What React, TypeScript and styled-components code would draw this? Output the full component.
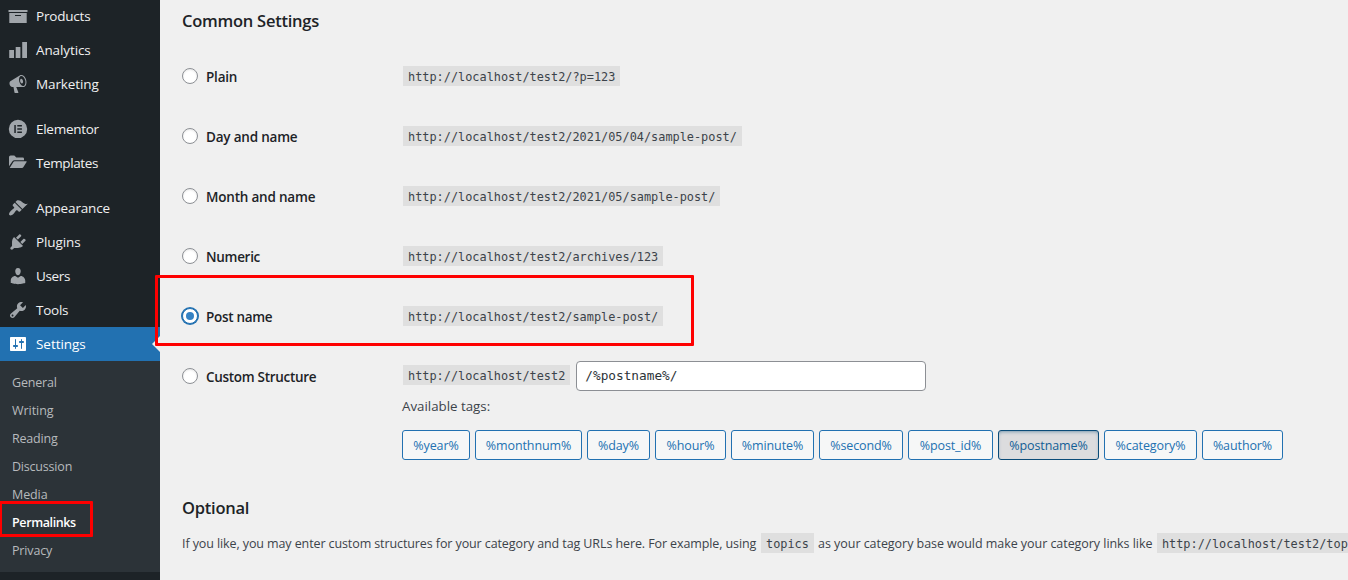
import React from "react";
import styled, { createGlobalStyle } from "styled-components";

const GlobalStyle = createGlobalStyle`
  * { box-sizing: border-box; }
  html, body { margin: 0; padding: 0; overflow: hidden; }
  body {
    background: #f0f0f0;
    color: #3c434a;
    font-family: "Open Sans", "Noto Sans", sans-serif;
    font-size: 12.5px;
  }
`;

const Page = styled.div`
  position: relative;
  display: flex;
  width: 1348px;
  height: 580px;
  overflow: hidden;
`;

/* ---------- Sidebar ---------- */

const Sidebar = styled.nav`
  flex: 0 0 160px;
  height: 580px;
  background: #1d2327;
  overflow: hidden;
`;

const MenuGroup = styled.div<{ $first?: boolean }>`
  display: flex;
  flex-direction: column;
  margin-top: ${(p) => (p.$first ? "-1px" : "11px")};
`;

const MenuItem = styled.a<{ $current?: boolean }>`
  position: relative;
  display: flex;
  align-items: center;
  gap: 8px;
  height: 34px;
  padding-left: 8px;
  font-size: 13.5px;
  color: ${(p) => (p.$current ? "#fff" : "#f0f0f1")};
  background: ${(p) => (p.$current ? "#2271b1" : "transparent")};
  svg {
    width: 20px;
    height: 20px;
    fill: ${(p) => (p.$current ? "#fff" : "#a0a5aa")};
  }
`;

const MenuLabel = styled.span<{ $ls?: number }>`
  line-height: 18px;
  letter-spacing: ${(p) => p.$ls ?? -0.2}px;
`;

const CurrentArrow = styled.span`
  position: absolute;
  right: 0;
  top: 9px;
  border: 8px solid transparent;
  border-left-width: 0;
  border-right-color: #f0f0f0;
`;

const SubMenu = styled.div`
  display: flex;
  flex-direction: column;
  padding: 8px 0 7px;
  background: #2c3338;
`;

const SubItem = styled.a<{ $current?: boolean; $ls?: number }>`
  height: 28px;
  padding-left: 12px;
  line-height: 28px;
  font-size: 12.5px;
  letter-spacing: ${(p) => p.$ls ?? -0.2}px;
  font-weight: ${(p) => (p.$current ? 600 : 400)};
  color: ${(p) => (p.$current ? "#fff" : "#b7babd")};
`;

/* ---------- Content ---------- */

const Content = styled.main`
  flex: 1;
  min-width: 0;
  padding: 9px 0 0 22px;
  overflow: hidden;
`;

const SectionTitle = styled.h2`
  margin: 0;
  height: 24px;
  line-height: 24px;
  font-size: 16.5px;
  font-weight: 600;
  letter-spacing: -0.25px;
  color: #1d2327;
`;

const OptionList = styled.div`
  display: flex;
  flex-direction: column;
  padding-top: 13px;
`;

const OptionRow = styled.div`
  display: grid;
  grid-template-columns: 220px 1fr;
  align-items: center;
  height: 60px;
`;

const OptionLabel = styled.label<{ $ls?: number }>`
  display: flex;
  align-items: center;
  gap: 8px;
  font-size: 13.5px;
  font-weight: 600;
  line-height: 20px;
  letter-spacing: ${(p) => p.$ls ?? -0.2}px;
  color: #1d2327;
  span { padding-top: 1px; }
`;

const Radio = styled.i<{ $checked?: boolean }>`
  display: flex;
  align-items: center;
  justify-content: center;
  width: 16px;
  height: 16px;
  border-radius: 50%;
  background: #fff;
  border: 1px solid ${(p) => (p.$checked ? "#2271b1" : "#8c8f94")};
  box-shadow: ${(p) => (p.$checked ? "0 0 0 1px #2271b1" : "inset 0 1px 2px rgba(0,0,0,.1)")};
  &::before {
    content: "";
    width: 8px;
    height: 8px;
    border-radius: 50%;
    background: ${(p) => (p.$checked ? "#3582c4" : "transparent")};
  }
`;

const Code = styled.code<{ $raised?: boolean }>`
  display: inline-block;
  flex: none;
  height: 20px;
  margin: 0 1px ${(p) => (p.$raised ? 2 : 0)}px;
  padding: 1px 5px 0;
  line-height: 21px;
  font-family: "DejaVu Sans Mono", monospace;
  font-size: 11.88px;
  white-space: pre;
  color: #3c434a;
  background: #dfdfdf;
`;

const CodeCell = styled.div`
  display: flex;
  align-items: center;
`;

const StructureInput = styled.input`
  width: 350px;
  height: 30px;
  margin-left: 5px;
  padding: 0 8px 2px;
  border: 1px solid #8c8f94;
  border-radius: 4px;
  outline: 0;
  background: #fff;
  color: #2c3338;
  font-family: "DejaVu Sans Mono", monospace;
  font-size: 12.75px;
`;

const TagArea = styled.div`
  margin-top: -10px;
  padding-left: 220px;
`;

const TagCaption = styled.p`
  margin: 0;
  height: 20px;
  line-height: 20px;
  font-size: 13.3px;
  letter-spacing: 0;
`;

const TagList = styled.div`
  display: flex;
  gap: 5px;
  padding-top: 14px;
`;

const TagButton = styled.button<{ $w: number; $active?: boolean }>`
  flex: 0 0 ${(p) => p.$w}px;
  height: 30px;
  padding: 2px 0 0;
  border: 1px solid ${(p) => (p.$active ? "#0a4b78" : "#2271b1")};
  border-radius: 3px;
  background: ${(p) => (p.$active ? "#dcdcde" : "#f6f7f7")};
  box-shadow: ${(p) => (p.$active ? "inset 0 2px 5px -3px #0a4b78" : "none")};
  color: ${(p) => (p.$active ? "#135e96" : "#2271b1")};
  font-family: inherit;
  font-size: 12.5px;
  line-height: 26px;
  text-align: center;
  letter-spacing: -0.1px;
`;

const Optional = styled.section`
  padding-top: 36px;
`;

const Hint = styled.p`
  display: flex;
  align-items: center;
  width: 1400px;
  height: 20px;
  margin: 13px 0 0;
  white-space: pre;
`;

const HintText = styled.span<{ $ls: number; $w: number }>`
  flex: 0 0 ${(p) => p.$w}px;
  padding-top: 2px;
  line-height: 20px;
  letter-spacing: ${(p) => p.$ls}px;
`;

/* Red marker frames drawn over the page */
const Marker = styled.div<{ $x: number; $y: number; $w: number; $h: number }>`
  position: absolute;
  left: ${(p) => p.$x}px;
  top: ${(p) => p.$y}px;
  width: ${(p) => p.$w}px;
  height: ${(p) => p.$h}px;
  border: 3px solid #fe0000;
  border-radius: 1px;
`;

const icons: Record<string, React.ReactNode> = {
  products: <path d="M19.5 4v2H.5V4h19zM1.3 7h17.4v10H1.3V7zM13 10V9H7v1h6z" />,
  analytics: <path d="M19 18V2h-4.8v16zM12.4 18V7H7.7v11zM6 18v-8H1.2v8z" />,
  marketing: (
    <path d="M18.15 5.94c.46 1.62.38 3.22-.02 4.48-.42 1.28-1.26 2.18-2.3 2.48-.16.06-.26.06-.4.06-.06.02-.12.02-.18.02-.06.02-.14.02-.22.02h-6.8l2.22 5.5c.02.14-.06.26-.14.34-.08.1-.24.16-.34.16H6.95c-.1 0-.26-.06-.34-.16-.08-.08-.16-.2-.14-.34l-1-5.5H4.25l-.02-.02c-.5.06-1.08-.18-1.54-.62s-.88-1.08-1.06-1.88c-.24-.8-.2-1.56-.02-2.2.18-.62.58-1.08 1.06-1.3l.02-.02 9-5.4c.1-.06.18-.1.24-.16.06-.04.14-.08.24-.12.16-.08.28-.12.5-.18 1.04-.3 2.24.1 3.22.98s1.84 2.24 2.26 3.86zm-2.58 5.98h-.02c.4-.1.74-.34 1.04-.7.58-.7.86-1.76.86-3.04 0-.64-.1-1.3-.28-1.98-.34-1.36-1.02-2.5-1.78-3.24s-1.68-1.1-2.46-.88c-.82.22-1.4.96-1.7 2-.32 1.04-.28 2.36.06 3.72.38 1.36 1 2.5 1.8 3.24.78.74 1.62 1.1 2.48.88zm-2.54-7.08c.22-.04.42-.02.62.04.38.16.76.48 1.02 1s.42 1.2.42 1.78c0 .3-.04.56-.12.8-.18.48-.44.84-.86.94-.34.1-.8-.06-1.14-.4s-.64-.86-.78-1.5c-.18-.62-.12-1.24.02-1.72s.48-.84.82-.94z" />
  ),
  elementor: (
    <path
      fillRule="evenodd"
      d="M10 .7a9.2 9.2 0 1 0 0 18.4a9.2 9.2 0 0 0 0-18.4zM6.3 6.1h1.5v7.8H6.3zM9.3 6.1h4.6v1.5H9.3zM9.3 9.25h4.6v1.5H9.3zM9.3 12.4h4.6v1.5H9.3z"
    />
  ),
  templates: (
    <path d="M1 13.2V4q0-1.6 1.6-1.6h3.7l2 2h6.4q1.3 0 1.3 1.3v1.5H6.5q-1.3 0-2 1.1zM1.7 14.9l3.7-6q.4-.7 1.2-.7h11.6q.9 0 .4.8l-3.3 5.2q-.5.7-1.3.7z" />
  ),
  appearance: (
    <path d="M14.48 11.06L7.41 3.99l1.5-1.5c.5-.56 2.3-.47 3.51.32 1.21.8 1.43 1.28 2.91 2.1 1.18.64 2.45 1.26 4.45.85zm-.71.71L6.7 4.7 4.93 6.47c-.39.39-.39 1.02 0 1.41l1.06 1.06c.39.39.39 1.03 0 1.42-.6.6-1.43 1.11-2.21 1.69-.35.26-.7.53-1.01.84C1.43 14.23.4 16.08 1.4 17.07c.99 1 2.84-.03 4.18-1.36.31-.31.58-.66.85-1.02.57-.78 1.08-1.61 1.69-2.21.39-.39 1.02-.39 1.41 0l1.06 1.06c.39.39 1.02.39 1.41 0z" />
  ),
  plugins: (
    <path d="M13.11 4.36L9.87 7.6 8 5.73l3.24-3.24c.35-.34 1.05-.2 1.56.32.52.51.66 1.21.31 1.55zm-8 1.77l.91-1.12 9.01 9.01-1.19.84c-.71.71-2.63 1.16-3.82 1.16H6.14L4.9 17.26c-.59.59-1.54.59-2.12 0-.59-.58-.59-1.53 0-2.12l1.24-1.24v-3.88c0-1.13.4-3.19 1.09-3.89zm7.26 3.97l3.24-3.24c.34-.35 1.04-.21 1.55.31.52.51.66 1.21.31 1.55l-3.24 3.25z" />
  ),
  users: (
    <path d="M10 9.25c-2.27 0-2.73-3.44-2.73-3.44C7 4.02 7.82 2 9.97 2c2.16 0 2.98 2.02 2.71 3.81 0 0-.41 3.44-2.68 3.44zm0 2.57L12.72 10c2.39 0 4.52 2.33 4.52 4.53v2.49s-3.65 1.13-7.24 1.13c-3.65 0-7.24-1.13-7.24-1.13v-2.49c0-2.25 1.94-4.48 4.47-4.48z" />
  ),
  tools: (
    <path d="M16.68 9.77c-1.34 1.34-3.3 1.67-4.95.99l-5.41 6.52c-.99.99-2.59.99-3.58 0s-.99-2.59 0-3.57l6.52-5.42c-.68-1.65-.35-3.61.99-4.95 1.28-1.28 3.12-1.62 4.72-1.06l-2.89 2.89 2.82 2.82 2.86-2.87c.53 1.58.18 3.39-1.08 4.65zM3.81 16.21c.4.39 1.04.39 1.43 0 .4-.4.4-1.04 0-1.43-.39-.4-1.03-.4-1.43 0-.39.39-.39 1.03 0 1.43z" />
  ),
  settings: (
    <path d="M18 16V4c0-.55-.45-1-1-1H3c-.55 0-1 .45-1 1v12c0 .55.45 1 1 1h14c.55 0 1-.45 1-1zM8 11h1c.55 0 1 .45 1 1s-.45 1-1 1H8v1.5c0 .28-.22.5-.5.5s-.5-.22-.5-.5V13H6c-.55 0-1-.45-1-1s.45-1 1-1h1V5.5c0-.28.22-.5.5-.5s.5.22.5.5V11zm5-2h-1c-.55 0-1-.45-1-1s.45-1 1-1h1V5.5c0-.28.22-.5.5-.5s.5.22.5.5V7h1c.55 0 1 .45 1 1s-.45 1-1 1h-1v5.5c0 .28-.22.5-.5.5s-.5-.22-.5-.5V9z" />
  ),
};

type Entry = { label: string; ls?: number };

const menuGroups: Entry[][] = [
  [{ label: "Products" }, { label: "Analytics", ls: -0.1 }, { label: "Marketing", ls: -0.1 }],
  [{ label: "Elementor", ls: -0.27 }, { label: "Templates", ls: -0.4 }],
  [
    { label: "Appearance", ls: -0.15 },
    { label: "Plugins", ls: -0.1 },
    { label: "Users", ls: -0.35 },
    { label: "Tools", ls: -0.25 },
    { label: "Settings", ls: -0.05 },
  ],
];

const subItems: Entry[] = [
  { label: "General" },
  { label: "Writing", ls: -0.05 },
  { label: "Reading" },
  { label: "Discussion" },
  { label: "Media", ls: -0.1 },
  { label: "Permalinks", ls: -0.38 },
  { label: "Privacy", ls: -0.15 },
];

const options: { label: string; url: string; ls?: number }[] = [
  { label: "Plain", url: "http://localhost/test2/?p=123" },
  { label: "Day and name", url: "http://localhost/test2/2021/05/04/sample-post/" },
  { label: "Month and name", url: "http://localhost/test2/2021/05/sample-post/" },
  { label: "Numeric", url: "http://localhost/test2/archives/123", ls: -0.3 },
  { label: "Post name", url: "http://localhost/test2/sample-post/", ls: -0.3 },
];

const tags: [string, number][] = [
  ["%year%", 68],
  ["%monthnum%", 107],
  ["%day%", 63],
  ["%hour%", 71],
  ["%minute%", 83],
  ["%second%", 84],
  ["%post_id%", 85],
  ["%postname%", 101],
  ["%category%", 93],
  ["%author%", 81],
];

export default function App() {
  return (
    <Page>
      <GlobalStyle />
      <Sidebar>
        {menuGroups.map((group, i) => (
          <MenuGroup key={i} $first={i === 0}>
            {group.map(({ label, ls }) => (
              <MenuItem key={label} $current={label === "Settings"}>
                <svg viewBox="0 0 20 20">{icons[label.toLowerCase()]}</svg>
                <MenuLabel $ls={ls}>{label}</MenuLabel>
                {label === "Settings" && <CurrentArrow />}
              </MenuItem>
            ))}
          </MenuGroup>
        ))}
        <SubMenu>
          {subItems.map(({ label, ls }) => (
            <SubItem key={label} $ls={ls} $current={label === "Permalinks"}>
              {label}
            </SubItem>
          ))}
        </SubMenu>
      </Sidebar>

      <Content>
        <SectionTitle>Common Settings</SectionTitle>
        <OptionList>
          {options.map(({ label, url, ls }) => (
            <OptionRow key={label}>
              <OptionLabel $ls={ls}>
                <Radio $checked={label === "Post name"} />
                <span>{label}</span>
              </OptionLabel>
              <CodeCell>
                <Code>{url}</Code>
              </CodeCell>
            </OptionRow>
          ))}
          <OptionRow>
            <OptionLabel $ls={-0.3}>
              <Radio />
              <span>Custom Structure</span>
            </OptionLabel>
            <CodeCell>
              <Code $raised>http://localhost/test2</Code>
              <StructureInput defaultValue="/%postname%/" />
            </CodeCell>
          </OptionRow>
        </OptionList>
        <TagArea>
          <TagCaption>Available tags:</TagCaption>
          <TagList>
            {tags.map(([tag, width]) => (
              <TagButton key={tag} $w={width} $active={tag === "%postname%"}>
                {tag}
              </TagButton>
            ))}
          </TagList>
        </TagArea>
        <Optional>
          <SectionTitle>Optional</SectionTitle>
          <Hint>
            <HintText $w={578} $ls={-0.1}>
              If you like, you may enter custom structures for your category and tag URLs here. For example, using
            </HintText>
            <Code>topics</Code>
            <HintText $w={341} $ls={-0.05}>
              {" "}as your category base would make your category links like
            </HintText>
            <Code>http://localhost/test2/topics/uncategorized/</Code>
          </Hint>
        </Optional>
      </Content>

      <Marker $x={155} $y={275} $w={539} $h={71} />
      <Marker $x={-1} $y={501} $w={94} $h={36} />
    </Page>
  );
}
